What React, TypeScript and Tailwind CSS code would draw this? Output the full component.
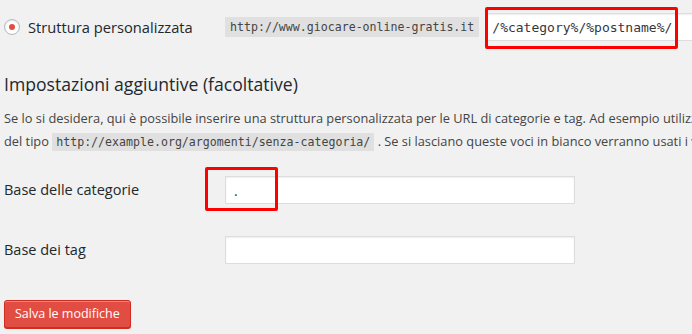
export default function App() {
  return (
    <div className="h-screen w-full overflow-hidden bg-[#f1f1f1] font-['Open_Sans',sans-serif] text-[#23282d]">
      {/* permalink structure row */}
      <div className="flex items-center pt-[13px]">
        <div className="flex w-[225px] shrink-0 items-center gap-[8px] pl-[4px]">
          <span className="flex h-[16px] w-[16px] items-center justify-center rounded-full border border-[#b4b9be] bg-white shadow-[inset_0_1px_2px_rgba(0,0,0,0.1)]">
            <span className="h-[6px] w-[6px] rounded-full bg-[#e14d43]" />
          </span>
          <span className="text-[14.7px] leading-[20px]">Struttura personalizzata</span>
        </div>
        <code className="shrink-0 bg-[#e0e0e0] px-[5px] font-['DejaVu_Sans_Mono',monospace] text-[11.6px] leading-[20px] text-[#444]">
          http://www.giocare-online-gratis.it
        </code>
        <div className="relative ml-[7px] shrink-0">
          <input
            readOnly
            value="/%category%/%postname%/"
            className="h-[28px] w-[260px] border border-[#ddd] bg-white px-[5px] font-['DejaVu_Sans_Mono',monospace] text-[13px] text-[#32373c] shadow-[inset_0_1px_2px_rgba(0,0,0,0.07)] outline-none"
          />
          <div className="pointer-events-none absolute -top-[6px] -left-[1px] h-[42px] w-[193px] rounded-[2px] border-[3px] border-[#ff0000]" />
        </div>
      </div>

      <h3 className="mt-[31px] pl-[4px] text-[17.6px] leading-[24px] font-normal">Impostazioni aggiuntive (facoltative)</h3>

      <div className="mt-[11px] pl-[4px] text-[12.8px] leading-[22px] whitespace-nowrap text-[#444]">
        <div>
          Se lo si desidera, qui è possibile inserire una struttura personalizzata per le URL di categorie e tag. Ad esempio utilizzando{' '}
          <code className="bg-[#e0e0e0] px-[4px] py-[2px] font-['DejaVu_Sans_Mono',monospace] text-[11.6px]">argomenti</code> come base per le categorie
        </div>
        <div>
          del tipo{' '}
          <code className="bg-[#e0e0e0] px-[4px] py-[2px] font-['DejaVu_Sans_Mono',monospace] text-[11.6px]">
            http://example.org/argomenti/senza-categoria/
          </code>{' '}
          . Se si lasciano queste voci in bianco verranno usati i valori predefiniti.
        </div>
      </div>

      {/* base rows */}
      <div className="mt-[23px] flex items-center">
        <label className="w-[225px] shrink-0 pl-[4px] text-[14.5px] leading-[20px]">Base delle categorie</label>
        <div className="relative">
          <input
            readOnly
            value="."
            className="h-[28px] w-[350px] border border-[#ddd] bg-white px-[8px] text-[14px] text-[#32373c] shadow-[inset_0_1px_2px_rgba(0,0,0,0.07)] outline-none"
          />
          <div className="pointer-events-none absolute -top-[9px] -left-[20px] h-[44px] w-[73px] rounded-[2px] border-[3px] border-[#ff0000]" />
        </div>
      </div>

      <div className="mt-[32px] flex items-center">
        <label className="w-[225px] shrink-0 pl-[4px] text-[14.5px] leading-[20px]">Base dei tag</label>
        <input
          readOnly
          value=""
          className="h-[28px] w-[350px] border border-[#ddd] bg-white px-[8px] text-[14px] shadow-[inset_0_1px_2px_rgba(0,0,0,0.07)] outline-none"
        />
      </div>

      <div className="mt-[36px] pl-[4px]">
        <button className="h-[28px] rounded-[3px] border border-[#d02c21] bg-[#e14d43] px-[10px] text-[12.5px] leading-[26px] text-white shadow-[inset_0_1px_0_#ec8a85,0_1px_0_#d02c21]">
          Salva le modifiche
        </button>
      </div>
    </div>
  )
}
